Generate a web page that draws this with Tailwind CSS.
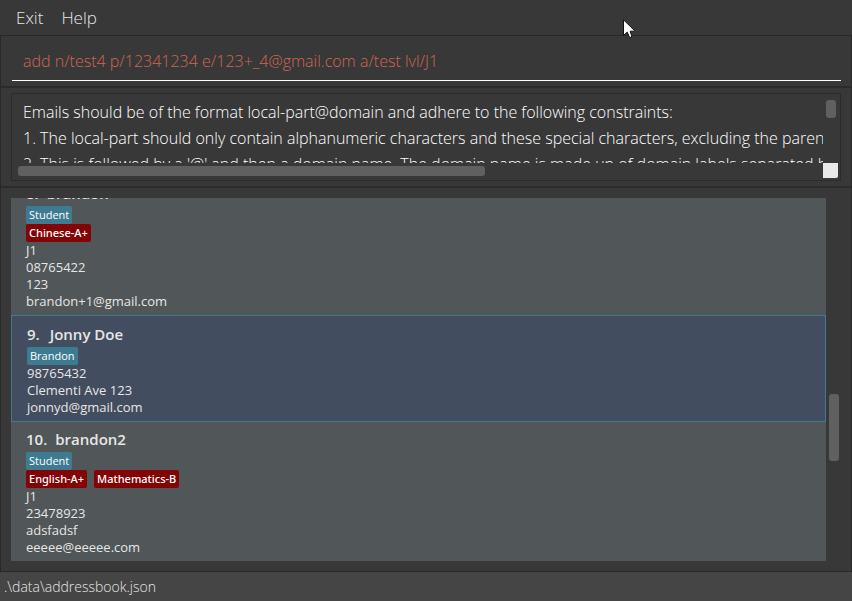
<!DOCTYPE html>
<html lang="en">
<head>
<meta charset="utf-8">
<meta name="viewport" content="width=device-width, initial-scale=1">
<title>Address Book</title>
<script src="https://cdn.jsdelivr.net/npm/@tailwindcss/browser@4"></script>
</head>
<body class="flex h-screen flex-col overflow-hidden bg-[#383838] font-['Open_Sans','Noto_Sans',sans-serif] text-[#e6e6e6]">
  <nav class="flex h-[35px] shrink-0 items-center gap-[18px] px-4 text-[17px] font-light">
    <button type="button">Exit</button>
    <button type="button">Help</button>
  </nav>

  <main class="flex min-h-0 flex-1 flex-col border border-b-0 border-[#282828]">
    <section class="h-[52px] shrink-0 border-b-2 border-[#2b2b2b] pt-[7px] pr-2.5 pl-[11px]">
      <input type="text" aria-label="Command" spellcheck="false" value="add n/test4 p/12341234 e/123+_4@gmail.com a/test lvl/J1" class="block h-[38px] w-full border-b border-white bg-transparent px-[11px] pb-0.5 text-[16px] font-light text-[#d06651] outline-none">
    </section>

    <section class="h-[100px] shrink-0 border-b-2 border-[#2b2b2b] px-2.5 pt-[5px]">
      <div class="flex h-[88px] flex-col border border-[#2b2b2b] pt-[5px] pr-0.5">
        <div class="flex min-h-0 flex-1 justify-between">
          <textarea readonly wrap="off" aria-label="Result" class="ml-[11px] block min-w-0 flex-1 resize-none overflow-hidden whitespace-pre text-[16px] leading-[26px] font-light text-white outline-none">Emails should be of the format local-part@domain and adhere to the following constraints:
1. The local-part should only contain alphanumeric characters and these special characters, excluding the parentheses
2. This is followed by a '@' and then a domain name. The domain name is made up of domain labels separated by periods.</textarea>
          <div class="w-[15px] pt-px pl-[3px]"><div class="h-[18px] w-2.5 rounded-[3px] bg-[#606060]"></div></div>
        </div>
        <div class="mb-0.5 flex h-[15px] justify-between">
          <div class="flex-1 pt-[3px] pl-1.5"><div class="h-2.5 w-[58%] rounded-[3px] bg-[#606060]"></div></div>
          <div class="w-[15px] rounded-br-[2px] bg-[#e9e9e9]"></div>
        </div>
      </div>
    </section>

    <section class="flex min-h-0 flex-1 pt-2.5 pr-[11px] pb-2.5 pl-2.5">
      <ul class="flex min-w-0 flex-1 flex-col justify-end overflow-hidden bg-[#515658] text-[13px] leading-[17px]">
        <li class="px-[15px] py-[5px]">
          <h2 class="flex h-[25px] items-center gap-2 text-[15px] font-semibold"><span>8.</span><span>brandon</span></h2>
          <div class="flex"><span class="h-[18px] rounded-[2px] bg-[#3e7b91] px-[3px] text-[11px] leading-[18px] font-medium text-white">Student</span></div>
          <div class="flex gap-[7px]"><span class="h-[18px] rounded-[2px] bg-[#830404] px-[3px] font-['Noto_Sans',sans-serif] text-[11px] leading-[18px] font-medium text-white">Chinese-A+</span></div>
          <p>J1</p><p>08765422</p><p>123</p><p>brandon+1@gmail.com</p>
        </li>
        <li class="border border-[#3e7b91] bg-[#424d5f] px-[15px] pt-1.5 pb-[5px]">
          <h2 class="flex h-[25px] items-center gap-2.5 text-[15px] font-semibold"><span>9.</span><span>Jonny Doe</span></h2>
          <div class="flex"><span class="h-[18px] rounded-[2px] bg-[#3e7b91] px-[3px] text-[11px] leading-[18px] font-medium text-white">Brandon</span></div>
          <p>98765432</p><p>Clementi Ave 123</p><p>jonnyd@gmail.com</p>
        </li>
        <li class="px-[15px] py-[5px]">
          <h2 class="flex h-[25px] items-center gap-2 text-[15px] font-semibold"><span>10.</span><span>brandon2</span></h2>
          <div class="flex"><span class="h-[18px] rounded-[2px] bg-[#3e7b91] px-[3px] text-[11px] leading-[18px] font-medium text-white">Student</span></div>
          <div class="flex gap-[7px]"><span class="h-[18px] rounded-[2px] bg-[#830404] px-[3px] font-['Noto_Sans',sans-serif] text-[11px] leading-[18px] font-medium text-white">English-A+</span><span class="h-[18px] rounded-[2px] bg-[#830404] px-[3px] font-['Noto_Sans',sans-serif] text-[11px] leading-[18px] font-medium text-white">Mathematics-B</span></div>
          <p>J1</p><p>23478923</p><p>adsfadsf</p><p>eeeee@eeeee.com</p>
        </li>
      </ul>
      <div class="flex w-[14px] flex-col pl-[3px]">
        <div class="flex-[196]"></div>
        <div class="w-2.5 flex-[67] rounded-[3px] bg-[#606060]"></div>
        <div class="flex-[100]"></div>
      </div>
    </section>
  </main>

  <footer class="flex h-[30px] shrink-0 items-center border-t border-[#282828] bg-[#454545] px-1 text-[14px] font-light">.\data\addressbook.json</footer>

  <svg aria-hidden="true" class="absolute top-[19px] left-[623px] h-[19px] w-[12px]" viewBox="0 0 12 19"><path d="M.5 .8V16.5L4.2 13.1L6.5 18.3H8.6V16.8L7.2 12.2H11.5V11.6Z" fill="#fff" stroke="#10101c" stroke-width="1"/></svg>
</body>
</html>
